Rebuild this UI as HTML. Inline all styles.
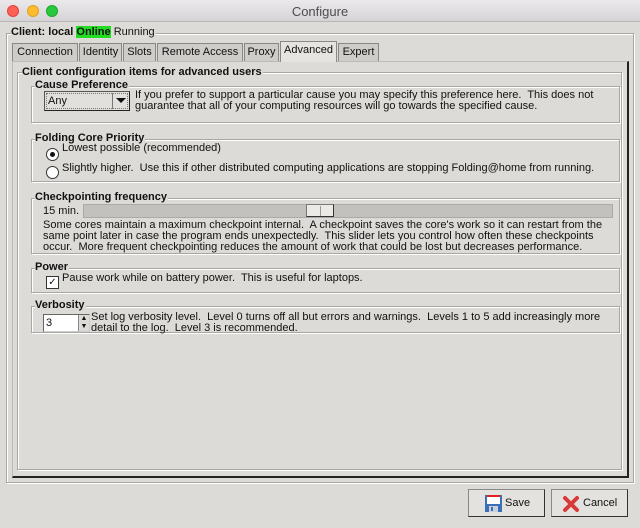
<!DOCTYPE html>
<html><head><style>
*{margin:0;padding:0;box-sizing:border-box}
body{width:640px;height:528px;background:#dddbd7;font-family:"Liberation Sans",sans-serif;font-size:11px;color:#111;position:relative;overflow:hidden}
.a{position:absolute;white-space:nowrap}
.tb{position:absolute;left:0;top:0;width:640px;height:22px;background:linear-gradient(#ebe9eb,#d5d3d5);border-bottom:1px solid #b8b6b8}
.dot{position:absolute;top:5px;width:12px;height:12px;border-radius:50%}
.fr{position:absolute;border:1px solid #a9a7a3;box-shadow:1px 1px 0 #fff inset,1px 1px 0 #fff}
.lb{position:absolute;background:#dddbd7;font-weight:bold;font-size:11px;padding-right:1px;line-height:12px}
.tab{position:absolute;top:43px;height:18px;background:#cfcdc9;border:1px solid #8a8884;border-bottom:none;font-size:11px;line-height:17px;text-align:center}
.btn{position:absolute;top:489px;height:28px;width:77px;background:#e4e2de;border:1px solid #888;border-right-color:#333;border-bottom-color:#333;font-size:11px;line-height:26px}
</style></head><body>
<div class="tb">
<div class="dot" style="left:7px;background:#fe5f57;border:1px solid #e0443e"></div>
<div class="dot" style="left:27px;background:#febc2e;border:1px solid #dea123"></div>
<div class="dot" style="left:46px;background:#28c840;border:1px solid #1aab29"></div>
<div class="a" style="left:0;width:640px;text-align:center;top:4px;font-size:13px;color:#4d4d4d">Configure</div>
</div>
<div class="fr" style="left:6px;top:33px;width:628px;height:450px"></div>
<div class="lb" style="left:11px;top:26px">Client: local <span style="background:#22dd22">Online</span> <span style="font-weight:normal">Running</span></div>
<div class="a" style="left:12px;top:61px;width:617px;height:417px;border:1px solid #bbb;border-right:2px solid #222;border-bottom:2px solid #222"></div>
<div class="tab" style="left:12px;width:66px">Connection</div>
<div class="tab" style="left:79px;width:43px">Identity</div>
<div class="tab" style="left:123px;width:33px">Slots</div>
<div class="tab" style="left:157px;width:86px">Remote Access</div>
<div class="tab" style="left:244px;width:35px">Proxy</div>
<div class="tab" style="left:280px;width:57px;top:41px;height:21px;background:#e6e4e0">Advanced</div>
<div class="tab" style="left:338px;width:41px">Expert</div>
<div class="fr" style="left:17px;top:72px;width:605px;height:398px"></div>
<div class="lb" style="left:22px;top:66px">Client configuration items for advanced users</div>

<div class="fr" style="left:31px;top:86px;width:589px;height:37px"></div>
<div class="lb" style="left:35px;top:79px">Cause Preference</div>
<div class="a" style="left:44px;top:91px;width:86px;height:20px;background:#e2e0dc;border:1px solid #555;border-right-color:#222;border-bottom-color:#222"><div class="a" style="left:1px;top:1px;width:82px;height:16px;border:1px dotted #777"></div><span class="a" style="left:3px;top:3px;font-size:11px">Any</span><div class="a" style="left:67px;top:1px;width:16px;height:16px;border-left:1px solid #777"></div><div class="a" style="left:71px;top:6px;width:0;height:0;border-left:5px solid transparent;border-right:5px solid transparent;border-top:5px solid #111"></div></div>
<div class="a" style="left:135px;top:90px;line-height:11px">If you prefer to support a particular cause you may specify this preference here.&nbsp; This does not<br>guarantee that all of your computing resources will go towards the specified cause.</div>

<div class="fr" style="left:31px;top:139px;width:589px;height:43px"></div>
<div class="lb" style="left:35px;top:132px">Folding Core Priority</div>
<div class="a" style="left:46px;top:148px;width:13px;height:13px;border-radius:50%;border:1px solid #333;background:#fff"><div class="a" style="left:3px;top:3px;width:5px;height:5px;border-radius:50%;background:#111"></div></div>
<div class="a" style="left:62px;top:142px">Lowest possible (recommended)</div>
<div class="a" style="left:46px;top:166px;width:13px;height:13px;border-radius:50%;border:1px solid #333;background:#fff"></div>
<div class="a" style="left:62px;top:162px">Slightly higher.&nbsp; Use this if other distributed computing applications are stopping Folding@home from running.</div>

<div class="fr" style="left:31px;top:198px;width:589px;height:56px"></div>
<div class="lb" style="left:35px;top:191px">Checkpointing frequency</div>
<div class="a" style="left:43px;top:205px">15 min.</div>
<div class="a" style="left:83px;top:204px;width:530px;height:14px;background:#c3c1bd;border:1px solid #aaa"></div>
<div class="a" style="left:306px;top:204px;width:28px;height:13px;background:#eceae6;border:1px solid #777;border-right-color:#333;border-bottom-color:#333"><div class="a" style="left:13px;top:1px;width:1px;height:10px;background:#999"></div></div>
<div class="a" style="left:43px;top:220px;line-height:11px">Some cores maintain a maximum checkpoint internal.&nbsp; A checkpoint saves the core's work so it can restart from the<br>same point later in case the program ends unexpectedly.&nbsp; This slider lets you control how often these checkpoints<br>occur.&nbsp; More frequent checkpointing reduces the amount of work that could be lost but decreases performance.</div>

<div class="fr" style="left:31px;top:268px;width:589px;height:25px"></div>
<div class="lb" style="left:35px;top:261px">Power</div>
<div class="a" style="left:46px;top:276px;width:13px;height:13px;border:1px solid #333;background:#fff;font-size:10px;line-height:11px;text-align:center">✓</div>
<div class="a" style="left:62px;top:272px">Pause work while on battery power.&nbsp; This is useful for laptops.</div>

<div class="fr" style="left:31px;top:306px;width:589px;height:27px"></div>
<div class="lb" style="left:35px;top:299px">Verbosity</div>
<div class="a" style="left:43px;top:314px;width:47px;height:18px;background:#fff;border:1px solid #666;border-right-color:#ccc;border-bottom-color:#ccc"><span class="a" style="left:2px;top:2px;font-size:11px">3</span><div class="a" style="left:34px;top:0;width:11px;height:16px;background:#dddbd7;border-left:1px solid #888;font-size:7px;line-height:8px;text-align:center">▲<br>▼</div></div>
<div class="a" style="left:91px;top:312px;line-height:11px">Set log verbosity level.&nbsp; Level 0 turns off all but errors and warnings.&nbsp; Levels 1 to 5 add increasingly more<br>detail to the log.&nbsp; Level 3 is recommended.</div>

<div class="btn" style="left:468px"><svg class="a" style="left:16px;top:5px" width="17" height="17" viewBox="0 0 17 17"><rect x="0" y="0" width="17" height="17" fill="#3b6fb6"/><rect x="2" y="0" width="13" height="2" fill="#e02020"/><rect x="2" y="2" width="13" height="7" fill="#fff"/><rect x="4" y="11" width="9" height="6" fill="#c8d0dc"/><rect x="6" y="12" width="2" height="4" fill="#3b6fb6"/></svg><span class="a" style="left:36px;top:0">Save</span></div>
<div class="btn" style="left:551px"><svg class="a" style="left:10px;top:5px" width="18" height="18" viewBox="0 0 18 18"><path d="M3 3 L15 15 M15 3 L3 15" stroke="#d83a3a" stroke-width="4" stroke-linecap="round"/></svg><span class="a" style="left:31px;top:0">Cancel</span></div>
</body></html>
